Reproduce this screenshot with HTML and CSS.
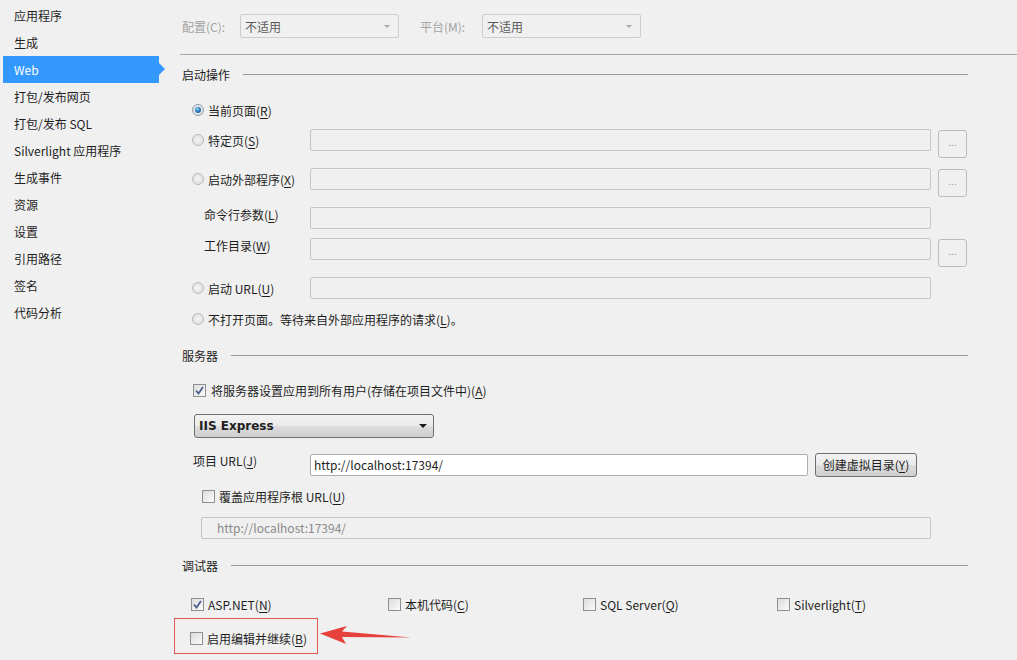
FILE: index.html
```html
<!DOCTYPE html>
<html lang="zh-CN">

<head>
    <meta charset="UTF-8" />
    <title>Web 属性</title>
    <link rel="stylesheet" href="styles.css">
</head>

<body>
    <div class="page">
        <ul class="side">
            <li>应用程序</li>
            <li>生成</li>
            <li class="active">Web</li>
            <li>打包/发布网页</li>
            <li>打包/发布 SQL</li>
            <li>Silverlight 应用程序</li>
            <li>生成事件</li>
            <li>资源</li>
            <li>设置</li>
            <li>引用路径</li>
            <li>签名</li>
            <li>代码分析</li>
        </ul>

        <div class="main">
            <div class="conf">
                <span class="dim">配置(C):</span>
                <div class="combo"><span>不适用</span><i class="caret"></i></div>
                <span class="dim plat">平台(M):</span>
                <div class="combo"><span>不适用</span><i class="caret"></i></div>
            </div>
            <div class="rule"></div>

            <div class="group-head start"><span>启动操作</span><i></i></div>

            <div class="row r-cur">
                <span class="radio on"></span><span class="txt">当前页面(<u>R</u>)</span>
            </div>
            <div class="row field tall">
                <div class="lbl"><span class="radio"></span><span class="txt">特定页(<u>S</u>)</span></div>
                <div class="box"></div>
                <div class="dots">...</div>
            </div>
            <div class="row field tall">
                <div class="lbl"><span class="radio"></span><span class="txt">启动外部程序(<u>X</u>)</span></div>
                <div class="box"></div>
                <div class="dots">...</div>
            </div>
            <div class="row field">
                <div class="lbl sub">命令行参数(<u>L</u>)</div>
                <div class="box"></div>
            </div>
            <div class="row field tall">
                <div class="lbl sub">工作目录(<u>W</u>)</div>
                <div class="box"></div>
                <div class="dots">...</div>
            </div>
            <div class="row field">
                <div class="lbl"><span class="radio"></span><span class="txt">启动 URL(<u>U</u>)</span></div>
                <div class="box"></div>
            </div>
            <div class="row field">
                <div class="lbl wide"><span class="radio"></span><span class="txt">不打开页面。等待来自外部应用程序的请求(<u>L</u>)。</span></div>
            </div>

            <div class="group-head server"><span>服务器</span><i></i></div>

            <div class="row chk-all">
                <span class="check on"><svg viewBox="0 0 11 11"><polyline points="2,5.5 4.5,8.5 9,2" /></svg></span>
                <span class="txt">将服务器设置应用到所有用户(存储在项目文件中)(<u>A</u>)</span>
            </div>

            <div class="iis"><b>IIS Express</b><i class="caret dark"></i></div>

            <div class="row proj">
                <div class="lbl proj-lbl">项目 URL(<u>J</u>)</div>
                <div class="box url">http://localhost:17394/</div>
                <div class="btn">创建虚拟目录(<u>Y</u>)</div>
            </div>

            <div class="row over">
                <span class="check"></span><span class="txt">覆盖应用程序根 URL(<u>U</u>)</span>
            </div>
            <div class="box root">http://localhost:17394/</div>

            <div class="group-head dbg"><span>调试器</span><i></i></div>

            <div class="debuggers">
                <div class="item"><span class="check on"><svg viewBox="0 0 11 11"><polyline points="2,5.5 4.5,8.5 9,2" /></svg></span><span class="txt">ASP.NET(<u>N</u>)</span></div>
                <div class="item"><span class="check"></span><span class="txt">本机代码(<u>C</u>)</span></div>
                <div class="item"><span class="check"></span><span class="txt">SQL Server(<u>Q</u>)</span></div>
                <div class="item"><span class="check"></span><span class="txt">Silverlight(<u>T</u>)</span></div>
            </div>

            <div class="edit-row">
                <div class="mark">
                    <span class="check"></span><span class="txt">启用编辑并继续(<u>B</u>)</span>
                </div>
                <svg class="arrow" viewBox="0 0 95 24" width="95" height="24">
                    <polygon points="1,9.5 28,2 23,7.5 92,13.5 23,13 27,20" />
                </svg>
            </div>
        </div>
    </div>
</body>

</html>
```

FILE: styles.css
```css
:root{
    --bg: #f0f0f0;
    --text: #1e1e1e;
    --dim: #a3a3a3;
    --blue: #3399ff;
    --line: #9a9a9a;
    --red: #e6413c;
}

*{
    margin: 0;
    padding: 0;
    box-sizing: border-box;
}
body{
    background-color: var(--bg);
    color: var(--text);
    font-family: "Noto Sans CJK SC", "Liberation Sans", sans-serif;
    font-size: 12px;
    width: 1017px;
    height: 660px;
    overflow: hidden;
}
u{
    text-decoration: underline;
    text-underline-offset: 2px;
}
.page{
    display: flex;
}

/* left navigation */
.side{
    list-style: none;
    width: 170px;
    padding-top: 2px;
}
.side li{
    height: 27px;
    line-height: 27px;
    padding-left: 14px;
    white-space: nowrap;
}
.side li.active{
    position: relative;
    margin-left: 3px;
    width: 156px;
    padding-left: 11px;
    background-color: var(--blue);
    color: white;
}
.side li.active::after{
    content: "";
    position: absolute;
    left: 156px;
    top: 7px;
    border-left: 6px solid var(--blue);
    border-top: 6px solid transparent;
    border-bottom: 6px solid transparent;
}

/* right side */
.main{
    flex: 1;
    padding-left: 10px;
    padding-top: 14px;
}
.conf{
    display: flex;
    align-items: center;
    height: 24px;
}
.dim{
    color: var(--dim);
    padding-left: 2px;
    width: 60px;
}
.dim.plat{
    margin-left: 21px;
    padding-left: 0;
    width: 62px;
}
.combo{
    width: 159px;
    height: 24px;
    border: 1px solid #cdcdcd;
    border-radius: 2px;
    display: flex;
    align-items: center;
    justify-content: space-between;
    padding: 0 8px 0 4px;
    color: #5a5a5a;
}
.caret{
    width: 0;
    height: 0;
    border-left: 3px solid transparent;
    border-right: 3px solid transparent;
    border-top: 3px solid #a8a8a8;
}
.caret.dark{
    border-left-width: 4px;
    border-right-width: 4px;
    border-top: 4px solid #1a1a1a;
}
.rule{
    margin-top: 16px;
    height: 1px;
    background-color: #a8a8a8;
}

.group-head{
    display: flex;
    align-items: center;
    height: 20px;
    margin-right: 49px;
    padding-left: 2px;
}
.group-head i{
    flex: 1;
    height: 1px;
    margin-left: 13px;
    background-color: var(--line);
}
.group-head.start{ margin-top: 9px; }
.group-head.server{ margin-top: 15px; }
.group-head.dbg{ margin-top: 16px; }

.row{
    display: flex;
    align-items: center;
    height: 20px;
    margin-top: 9px;
}
.row.r-cur{
    margin-top: 16px;
    padding-left: 12px;
}
.row.field{
    align-items: flex-start;
    height: 22px;
    padding-left: 10px;
}
.row.field.tall{
    height: 30px;
}
.lbl{
    width: 120px;
    height: 22px;
    display: flex;
    align-items: center;
    padding-left: 2px;
    white-space: nowrap;
}
.lbl.wide{
    width: auto;
}
.lbl.sub{
    padding-left: 14px;
    align-items: flex-start;
    line-height: 16px;
}
.txt{
    margin-left: 4px;
    white-space: nowrap;
}

.radio{
    width: 12px;
    height: 12px;
    border-radius: 50%;
    border: 1px solid #b9b9b9;
    background: radial-gradient(circle, #f6f6f6 0%, #e2e2e2 70%);
    flex: none;
    display: inline-flex;
    align-items: center;
    justify-content: center;
}
.radio.on{
    border-color: #8a9bb0;
}
.radio.on::after{
    content: "";
    width: 6px;
    height: 6px;
    border-radius: 50%;
    background: radial-gradient(circle at 40% 35%, #8fd0f2 0%, #2a7fc4 45%, #113e6c 100%);
}

.box{
    width: 621px;
    height: 22px;
    border: 1px solid #c6c6c6;
    border-radius: 2px;
}
.dots{
    width: 29px;
    height: 28px;
    margin-left: 7px;
    margin-top: 1px;
    border: 1px solid #bcbcbc;
    border-radius: 3px;
    color: #9a9a9a;
    font-size: 10px;
    line-height: 22px;
    text-align: center;
}

.check{
    width: 13px;
    height: 13px;
    border: 1px solid #8f8f8f;
    background: linear-gradient(135deg, #dcdcdc, #fbfbfb);
    flex: none;
    display: inline-flex;
    align-items: center;
    justify-content: center;
}
.check svg{
    width: 11px;
    height: 11px;
    fill: none;
    stroke: #4d5f8c;
    stroke-width: 1.8;
}
.chk-all{
    margin-top: 15px;
    padding-left: 13px;
}
.chk-all .txt{ margin-left: 5px; }

.iis{
    margin-top: 14px;
    margin-left: 14px;
    width: 240px;
    height: 24px;
    border: 1px solid #707070;
    border-radius: 3px;
    background: linear-gradient(#f2f2f2, #ebebeb 50%, #dddddd 51%, #cfcfcf);
    display: flex;
    align-items: center;
    justify-content: space-between;
    padding: 0 6px 0 4px;
    font-family: "DejaVu Sans", sans-serif;
    font-size: 12px;
}

.row.proj{
    margin-top: 15px;
    height: 24px;
    align-items: flex-start;
    padding-left: 13px;
}
.proj-lbl{
    width: 117px;
    height: 16px;
    line-height: 16px;
    padding-left: 0;
}
.box.url{
    width: 498px;
    margin-top: 1px;
    background-color: white;
    border-color: #abadb3;
    padding-left: 3px;
    line-height: 20px;
}
.btn{
    width: 102px;
    height: 24px;
    margin-left: 7px;
    border: 1px solid #707070;
    border-radius: 3px;
    background: linear-gradient(#f2f2f2, #ebebeb 50%, #dddddd 51%, #cfcfcf);
    text-align: center;
    line-height: 22px;
}

.row.over{
    padding-left: 22px;
}
.box.root{
    margin-top: 11px;
    margin-left: 21px;
    width: 730px;
    color: #8a8a8a;
    padding-left: 15px;
    line-height: 20px;
}

.debuggers{
    display: grid;
    grid-template-columns: 197px 195px 194px auto;
    margin-top: 19px;
    padding-left: 11px;
    height: 20px;
}
.debuggers .item{
    display: flex;
    align-items: center;
}
.debuggers .txt{ margin-left: 4px; }

.edit-row{
    display: flex;
    align-items: flex-start;
    margin-top: 4px;
}
.mark{
    margin-left: -6px;
    width: 144px;
    height: 36px;
    border: 1px solid #e05454;
    display: flex;
    align-items: center;
    padding: 5px 0 0 15px;
}
.arrow{
    margin-left: 1px;
    margin-top: 6px;
}
.arrow polygon{
    fill: var(--red);
}
```
